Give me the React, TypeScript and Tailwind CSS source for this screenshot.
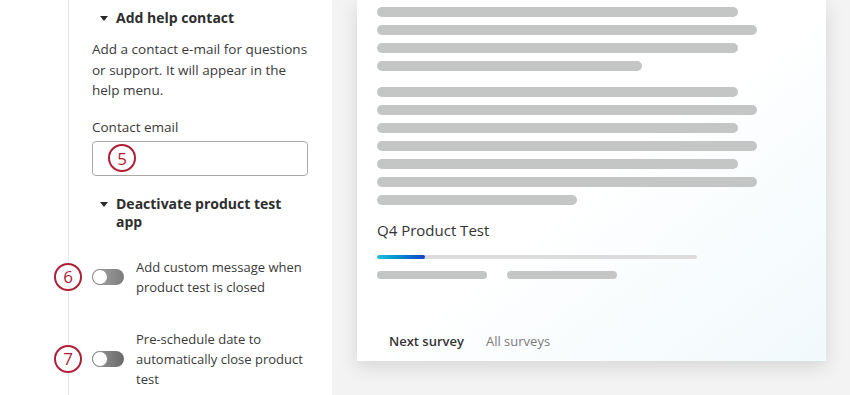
import React from 'react'

const font = { fontFamily: '"Open Sans", "Liberation Sans", sans-serif' }

const Badge = ({ n }: { n: number }) => (
  <div className="w-[28px] h-[28px] rounded-full border-[2.5px] border-[#b01e35] bg-white flex items-center justify-center text-[17px] font-medium leading-none text-[#b01e35]">
    {n}
  </div>
)

const Caret = () => (
  <svg width="8" height="5" viewBox="0 0 8 5" className="shrink-0">
    <path d="M0 0h8L4 5z" fill="#2b2b2b" />
  </svg>
)

const Toggle = ({ dark }: { dark?: boolean }) => (
  <div
    className={`relative w-[32px] h-[16px] rounded-full shrink-0 ${
      dark ? 'bg-gradient-to-r from-[#9a9a9a] to-[#6a6a6a]' : 'bg-gradient-to-r from-[#a8a8a8] to-[#7d7d7d]'
    }`}
  >
    <div className="absolute left-0 top-0 w-[16px] h-[16px] rounded-full bg-white border border-[#8c8c8c]" />
  </div>
)

const Bar = ({ w }: { w: number }) => (
  <div className="h-[10px] rounded-full bg-[#c4c5c5]" style={{ width: w }} />
)

export default function App() {
  const group1 = [361, 380, 361, 265]
  const group2 = [361, 380, 361, 380, 361, 380, 200]
  return (
    <div className="flex w-[850px] h-[395px] overflow-hidden text-[#3a3a3a]" style={font}>
      {/* settings panel */}
      <div className="w-[332px] h-full bg-white pl-[68px]">
        <div className="relative h-full border-l border-[#e8e8e8] pl-[23px] pr-[16px]">
          <div className="flex items-center gap-[8px] pl-[8px] pt-[8px] h-[28px]">
            <Caret />
            <span className="text-[14px] font-bold leading-[20px] text-[#2e2e2e]">Add help contact</span>
          </div>
          <p className="mt-[11px] w-[216px] text-[13.5px] leading-[20.5px]">
            Add a contact e-mail for questions or support. It will appear in the help menu.
          </p>
          <div className="mt-[16px] text-[13.5px] leading-[20px]">Contact email</div>
          <div className="mt-[4px] h-[35px] w-[216px] rounded-[4px] border border-[#a9a9a9] flex items-center pl-[15px]">
            <Badge n={5} />
          </div>

          <div className="mt-[19px] flex items-start gap-[8px] pl-[8px]">
            <div className="pt-[7px]">
              <Caret />
            </div>
            <span className="text-[14px] font-bold leading-[18px] text-[#2e2e2e] w-[180px]">
              Deactivate product test app
            </span>
          </div>

          <div className="relative mt-[26px] flex items-center gap-[12px]">
            <div className="absolute left-[-38px] top-1/2 -translate-y-1/2">
              <Badge n={6} />
            </div>
            <Toggle />
            <span className="text-[13px] leading-[20px] w-[184px]">
              Add custom message when product test is closed
            </span>
          </div>

          <div className="relative mt-[32px] flex items-center gap-[12px]">
            <div className="absolute left-[-38px] top-1/2 -translate-y-1/2">
              <Badge n={7} />
            </div>
            <Toggle dark />
            <span className="text-[13px] leading-[20px] w-[184px]">
              Pre-schedule date to automatically close product test
            </span>
          </div>
        </div>
      </div>

      {/* preview */}
      <div className="flex-1 h-full bg-[#f3f3f3] pl-[25px]">
        <div className="w-[469px] h-[361px] bg-gradient-to-br from-white via-white to-[#f1f9fc] shadow-[0_6px_18px_rgba(0,0,0,0.12)] pl-[20px] pt-[7px] flex flex-col">
          <div className="flex flex-col gap-[8px]">
            {group1.map((w, i) => (
              <Bar key={i} w={w} />
            ))}
          </div>
          <div className="mt-[16px] flex flex-col gap-[8px]">
            {group2.map((w, i) => (
              <Bar key={i} w={w} />
            ))}
          </div>
          <div className="mt-[14px] text-[15px] leading-[22px] text-[#333]">Q4 Product Test</div>
          <div className="mt-[14px] w-[320px] h-[4px] rounded-full bg-[#dcdcdc] overflow-hidden">
            <div className="h-full w-[48px] rounded-full bg-gradient-to-r from-[#1fc0d8] to-[#1a3fc4]" />
          </div>
          <div className="mt-[12px] flex gap-[20px]">
            <div className="w-[110px] h-[8px] rounded-full bg-[#c4c5c5]" />
            <div className="w-[110px] h-[8px] rounded-full bg-[#c4c5c5]" />
          </div>
          <div className="mt-auto mb-[10px] flex gap-[22px] pl-[12px] text-[13px] leading-[20px]">
            <span className="font-semibold text-[#333]">Next survey</span>
            <span className="text-[#7a7a7a]">All surveys</span>
          </div>
        </div>
      </div>
    </div>
  )
}
